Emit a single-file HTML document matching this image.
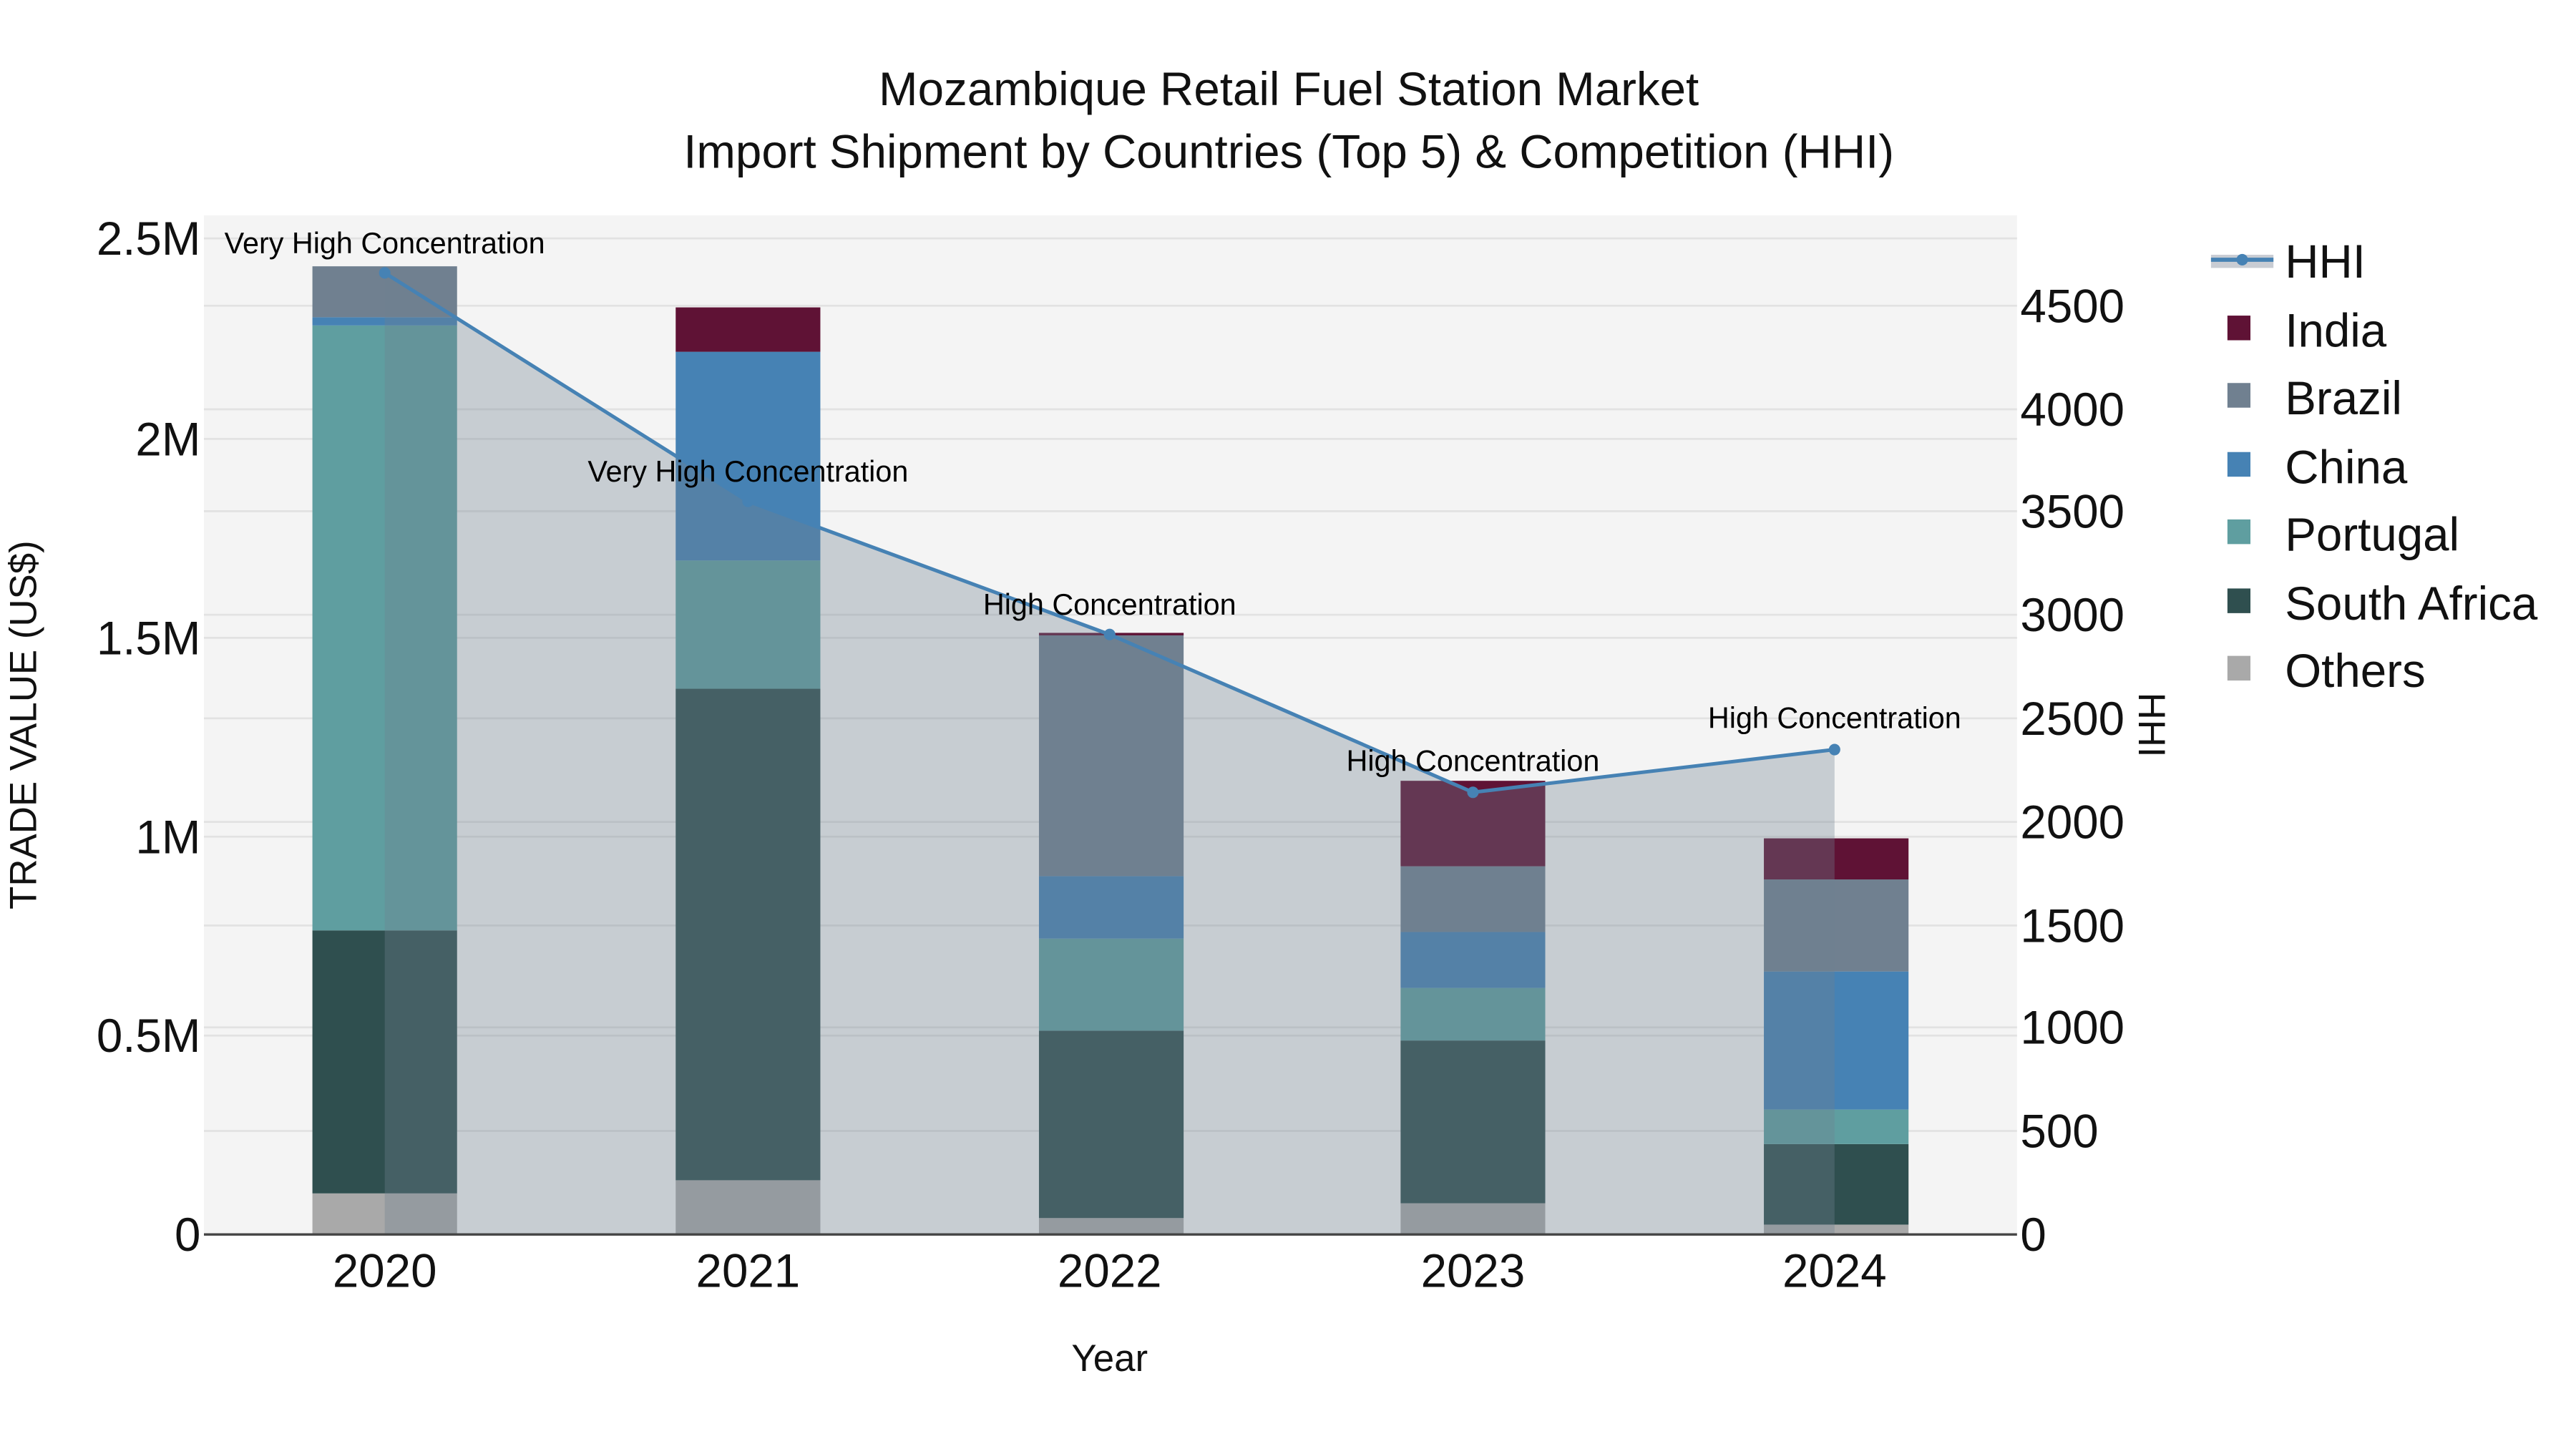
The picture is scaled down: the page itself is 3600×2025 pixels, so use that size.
<!DOCTYPE html>
<html><head><meta charset="utf-8"><style>
html,body{margin:0;padding:0;background:#fff;}
svg{display:block;font-family:"Liberation Sans",Arial,sans-serif;}
</style></head><body>
<svg width="3600" height="2025" viewBox="0 0 1567 881.5" xmlns="http://www.w3.org/2000/svg">
<rect x="0" y="0" width="1567" height="881.5" fill="#fff"/>
<rect x="124" y="131" width="1103" height="620" fill="#f4f4f4"/>
<g stroke="#e2e2e2" stroke-width="1.2">
<line x1="124" x2="1227" y1="630" y2="630"/><line x1="124" x2="1227" y1="509" y2="509"/><line x1="124" x2="1227" y1="388" y2="388"/><line x1="124" x2="1227" y1="267" y2="267"/><line x1="124" x2="1227" y1="145" y2="145"/>
<line x1="124" x2="1227" y1="688" y2="688"/><line x1="124" x2="1227" y1="625" y2="625"/><line x1="124" x2="1227" y1="563" y2="563"/><line x1="124" x2="1227" y1="500" y2="500"/><line x1="124" x2="1227" y1="437" y2="437"/><line x1="124" x2="1227" y1="374" y2="374"/><line x1="124" x2="1227" y1="311" y2="311"/><line x1="124" x2="1227" y1="249" y2="249"/><line x1="124" x2="1227" y1="186" y2="186"/>
</g>
<g>
<rect x="190" y="726" width="88" height="25" fill="#a9a9a9"/>
<rect x="190" y="566" width="88" height="160" fill="#2f4f4f"/>
<rect x="190" y="198" width="88" height="368" fill="#5f9ea0"/>
<rect x="190" y="193" width="88" height="5" fill="#4682b4"/>
<rect x="190" y="162" width="88" height="31" fill="#708090"/>
</g>
<g>
<rect x="411" y="718" width="88" height="33" fill="#a9a9a9"/>
<rect x="411" y="419" width="88" height="299" fill="#2f4f4f"/>
<rect x="411" y="341" width="88" height="78" fill="#5f9ea0"/>
<rect x="411" y="214" width="88" height="127" fill="#4682b4"/>
<rect x="411" y="187" width="88" height="27" fill="#5f1235"/>
</g>
<g>
<rect x="632" y="741" width="88" height="10" fill="#a9a9a9"/>
<rect x="632" y="627" width="88" height="114" fill="#2f4f4f"/>
<rect x="632" y="571" width="88" height="56" fill="#5f9ea0"/>
<rect x="632" y="533" width="88" height="38" fill="#4682b4"/>
<rect x="632" y="386" width="88" height="147" fill="#708090"/>
<rect x="632" y="385" width="88" height="1.5" fill="#5f1235"/>
</g>
<g>
<rect x="852" y="732" width="88" height="19" fill="#a9a9a9"/>
<rect x="852" y="633" width="88" height="99" fill="#2f4f4f"/>
<rect x="852" y="601" width="88" height="32" fill="#5f9ea0"/>
<rect x="852" y="567" width="88" height="34" fill="#4682b4"/>
<rect x="852" y="527" width="88" height="40" fill="#708090"/>
<rect x="852" y="475" width="88" height="52" fill="#5f1235"/>
</g>
<g>
<rect x="1073" y="745" width="88" height="6" fill="#a9a9a9"/>
<rect x="1073" y="696" width="88" height="49" fill="#2f4f4f"/>
<rect x="1073" y="675" width="88" height="21" fill="#5f9ea0"/>
<rect x="1073" y="591" width="88" height="84" fill="#4682b4"/>
<rect x="1073" y="535" width="88" height="56" fill="#708090"/>
<rect x="1073" y="510" width="88" height="25" fill="#5f1235"/>
</g>
<polygon points="234,166 455,305 675,386 896,482 1116,456 1116,751 234,751" fill="rgba(112,128,144,0.34)"/>
<line x1="124" x2="1227" y1="751" y2="751" stroke="#444" stroke-width="1.5"/>
<polyline points="234,166 455,305 675,386 896,482 1116,456" fill="none" stroke="#4682b4" stroke-width="2.2"/>
<g fill="#4682b4"><circle cx="234" cy="166" r="3.5"/><circle cx="455" cy="305" r="3.5"/><circle cx="675" cy="386" r="3.5"/><circle cx="896" cy="482" r="3.5"/><circle cx="1116" cy="456" r="3.5"/></g>
<g font-size="18" fill="#000" text-anchor="middle">
<text x="234" y="154">Very High Concentration</text>
<text x="455" y="293">Very High Concentration</text>
<text x="675" y="374">High Concentration</text>
<text x="896" y="469">High Concentration</text>
<text x="1116" y="443">High Concentration</text>
</g>
<g font-size="28.5" fill="#111" text-anchor="middle">
<text x="784" y="64">Mozambique Retail Fuel Station Market</text>
<text x="784" y="102">Import Shipment by Countries (Top 5) &amp; Competition (HHI)</text>
</g>
<g font-size="28.5" fill="#111" text-anchor="end">
<text x="122" y="761">0</text><text x="122" y="640">0.5M</text><text x="122" y="519">1M</text><text x="122" y="398">1.5M</text><text x="122" y="277">2M</text><text x="122" y="155">2.5M</text>
</g>
<g font-size="28.5" fill="#111">
<text x="1229" y="761">0</text><text x="1229" y="698">500</text><text x="1229" y="635">1000</text><text x="1229" y="573">1500</text><text x="1229" y="510">2000</text><text x="1229" y="447">2500</text><text x="1229" y="384">3000</text><text x="1229" y="321">3500</text><text x="1229" y="259">4000</text><text x="1229" y="196">4500</text>
</g>
<g font-size="28.5" fill="#111" text-anchor="middle">
<text x="234" y="783">2020</text><text x="455" y="783">2021</text><text x="675" y="783">2022</text><text x="896" y="783">2023</text><text x="1116" y="783">2024</text>
</g>
<text x="675" y="834" font-size="23" text-anchor="middle" fill="#111">Year</text>
<text transform="translate(22,441) rotate(-90)" font-size="23" text-anchor="middle" fill="#111">TRADE VALUE (US$)</text>
<text transform="translate(1301,441) rotate(90)" font-size="23" text-anchor="middle" fill="#111">HHI</text>
<g>
<rect x="1345" y="155" width="38" height="8" fill="#c8ccd3"/>
<line x1="1345" x2="1383" y1="158" y2="158" stroke="#4682b4" stroke-width="2.5"/>
<circle cx="1364" cy="158" r="3.5" fill="#4682b4"/>
<rect x="1355" y="192" width="14" height="15" fill="#5f1235"/>
<rect x="1355" y="233" width="14" height="15" fill="#708090"/>
<rect x="1355" y="275" width="14" height="15" fill="#4682b4"/>
<rect x="1355" y="316" width="14" height="15" fill="#5f9ea0"/>
<rect x="1355" y="358" width="14" height="15" fill="#2f4f4f"/>
<rect x="1355" y="399" width="14" height="15" fill="#a9a9a9"/>
</g>
<g font-size="28.5" fill="#111">
<text x="1390" y="169">HHI</text><text x="1390" y="211">India</text><text x="1390" y="252">Brazil</text><text x="1390" y="294">China</text><text x="1390" y="335">Portugal</text><text x="1390" y="377">South Africa</text><text x="1390" y="418">Others</text>
</g>
</svg>
</body></html>
